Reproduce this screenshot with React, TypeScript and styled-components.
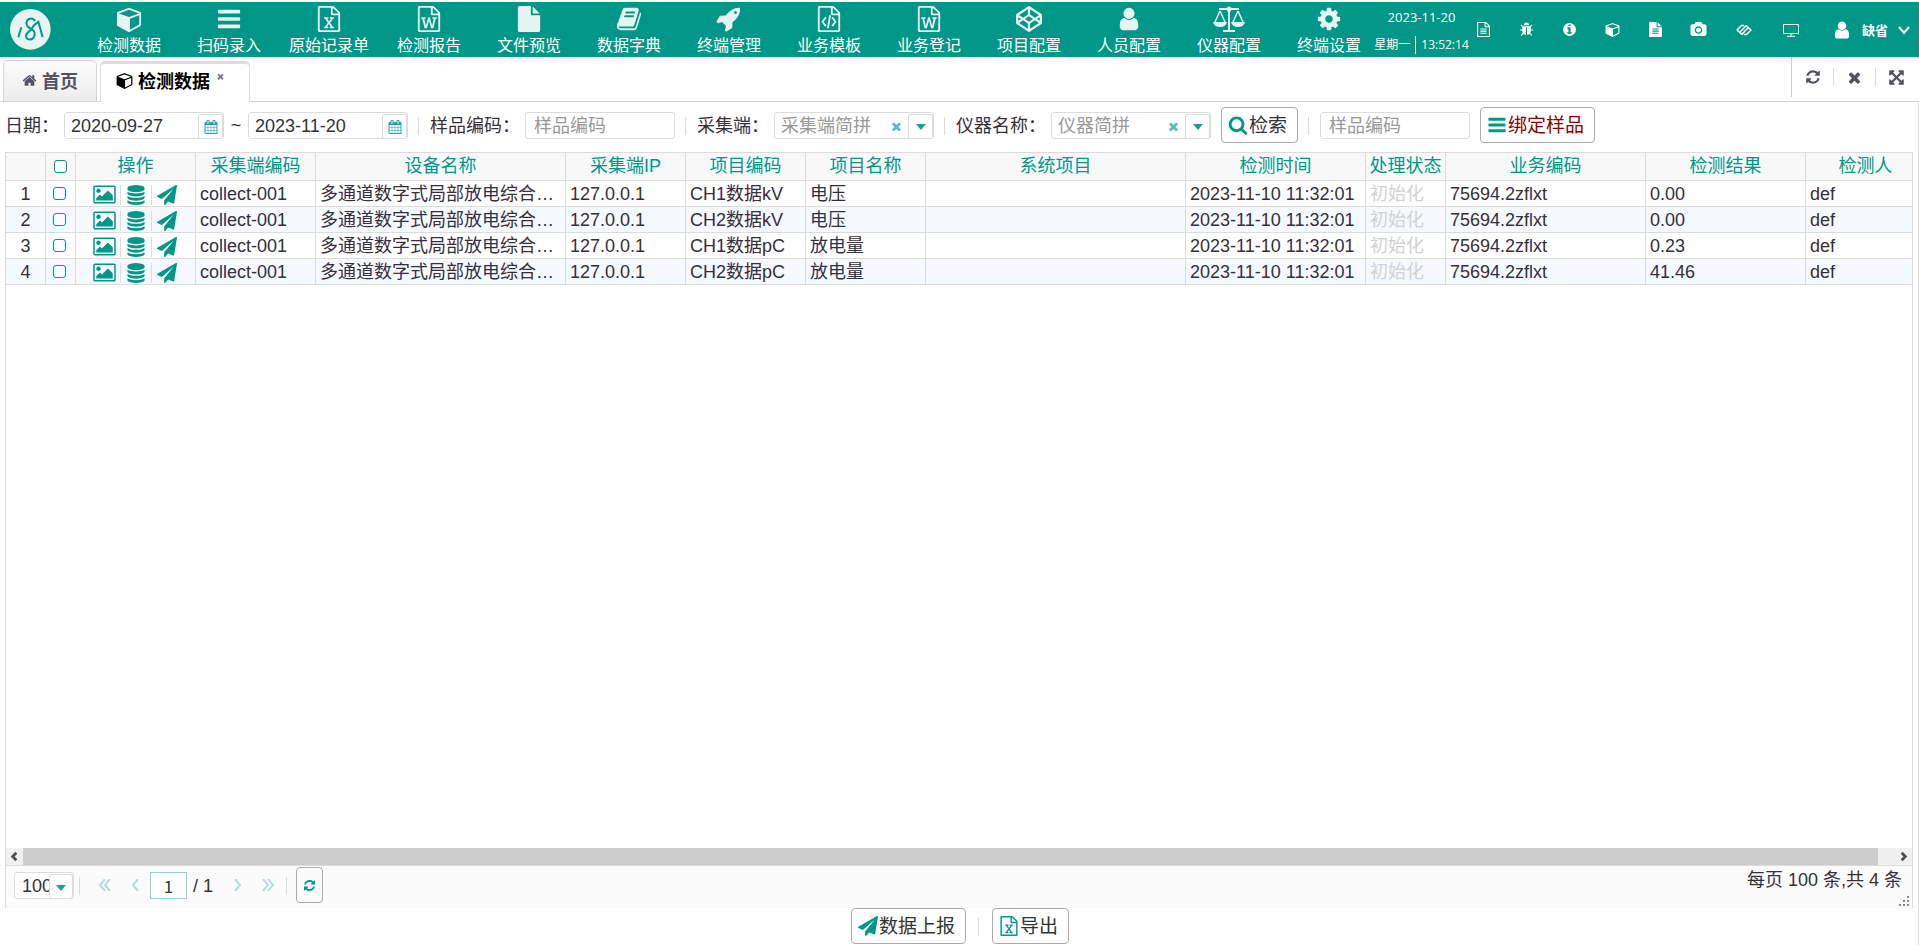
import React from 'react';
import styled, { createGlobalStyle, css } from 'styled-components';

const teal = '#009688';
const line = '#dcdcdc';
const ink = '#362f38';
const cjk = '"Noto Sans CJK SC", sans-serif';

const GlobalStyle = createGlobalStyle`
  *, *::before, *::after { box-sizing: border-box; }
  body {
    margin: 0;
    background: #fff;
    color: ${ink};
    font: 18px/26px "Liberation Sans", ${cjk};
  }
  button, input, select { font: inherit; color: inherit; margin: 0; }
  button { cursor: pointer; }
  a { color: inherit; text-decoration: none; }
`;

/* ---------- icons ---------- */

const glyphs = {
  cube: 'M896 1629l640-349v-636l-640 233v752zM832 764l698-254-698-254-698 254zM1664 512v768q0 35-18 65t-49 47l-704 384q-28 16-61 16t-61-16l-704-384q-31-17-49-47t-18-65v-768q0-40 23-73t61-47l704-256q22-8 44-8t44 8l704 256q38 14 61 47t23 73z',
  bars: 'M1664 1344v128q0 26-19 45t-45 19h-1408q-26 0-45-19t-19-45v-128q0-26 19-45t45-19h1408q26 0 45 19t19 45zm0-512v128q0 26-19 45t-45 19h-1408q-26 0-45-19t-19-45v-128q0-26 19-45t45-19h1408q26 0 45 19t19 45zm0-512v128q0 26-19 45t-45 19h-1408q-26 0-45-19t-19-45v-128q0-26 19-45t45-19h1408q26 0 45 19t19 45z',
  excel: 'M1596 380q28 28 48 76t20 88v1152q0 40-28 68t-68 28h-1344q-40 0-68-28t-28-68v-1600q0-40 28-68t68-28h896q40 0 88 20t76 48zm-444-244v376h376q-10-29-22-41l-313-313q-12-12-41-22zm384 1528v-1024h-416q-40 0-68-28t-28-68v-416h-768v1536h1280zm-979-234v106h281v-106h-75l103-161q5-7 10-16.5t7.5-13.5 3.5-4h2q1 4 5 10 2 4 4.5 7.5t6 8 6.5 8.5l107 161h-76v106h291v-106h-68l-192-273 195-282h67v-107h-279v107h74l-103 159q-4 7-10 16.5t-9 13.5l-2 3h-2q-1-4-5-10-6-11-17-23l-106-159h76v-107h-290v107h68l189 272-194 283h-68z',
  word: 'M1596 380q28 28 48 76t20 88v1152q0 40-28 68t-68 28h-1344q-40 0-68-28t-28-68v-1600q0-40 28-68t68-28h896q40 0 88 20t76 48zm-444-244v376h376q-10-29-22-41l-313-313q-12-12-41-22zm384 1528v-1024h-416q-40 0-68-28t-28-68v-416h-768v1536h1280zm-1175-896v107h70l164 661h159l128-485q7-20 10-46 2-16 2-24h4l3 24q1 3 3.5 20t5.5 26l128 485h159l164-661h70v-107h-300v107h90l-99 438q-5 20-7 46l-2 21h-4l-3-21q-1-5-4-21t-5-25l-144-545h-114l-144 545q-2 9-4.5 24.5t-3.5 21.5l-4 21h-4l-2-21q-2-26-7-46l-99-438h90v-107h-300z',
  code: 'M1596 380q28 28 48 76t20 88v1152q0 40-28 68t-68 28h-1344q-40 0-68-28t-28-68v-1600q0-40 28-68t68-28h896q40 0 88 20t76 48zm-444-244v376h376q-10-29-22-41l-313-313q-12-12-41-22zm384 1528v-1024h-416q-40 0-68-28t-28-68v-416h-768v1536h1280zM608 768q8-11 21-12.5t24 6.5l51 38q11 8 12.5 21t-6.5 24l-182 243 182 243q8 11 6.5 24t-12.5 21l-51 38q-11 8-24 6.5t-21-12.5l-226-301q-14-19 0-38zm802 301q14 19 0 38l-226 301q-8 11-21 12.5t-24-6.5l-51-38q-11-8-12.5-21t6.5-24l182-243-182-243q-8-11-6.5-24t12.5-21l51-38q11-8 24-6.5t21 12.5zm-620 461q-13-2-20.5-13t-5.5-24l138-831q2-13 13-20.5t24-5.5l63 10q13 2 20.5 13t5.5 24l-138 831q-2 13-13 20.5t-24 5.5z',
  file: 'M1152 512v-472q22 14 36 28l408 408q14 14 28 36h-472zm-128 32q0 40 28 68t68 28h544v1056q0 40-28 68t-68 28h-1344q-40 0-68-28t-28-68v-1600q0-40 28-68t68-28h800v544z',
  fileText: 'M1596 476q14 14 28 36h-472v-472q22 14 36 28zm-476 164h544v1056q0 40-28 68t-68 28h-1344q-40 0-68-28t-28-68v-1600q0-40 28-68t68-28h800v544q0 40 28 68t68 28zm160 736v-64q0-14-9-23t-23-9h-704q-14 0-23 9t-9 23v64q0 14 9 23t23 9h704q14 0 23-9t9-23zm0-256v-64q0-14-9-23t-23-9h-704q-14 0-23 9t-9 23v64q0 14 9 23t23 9h704q14 0 23-9t9-23zm0-256v-64q0-14-9-23t-23-9h-704q-14 0-23 9t-9 23v64q0 14 9 23t23 9h704q14 0 23-9t9-23z',
  fileLines: 'M1596 380q28 28 48 76t20 88v1152q0 40-28 68t-68 28h-1344q-40 0-68-28t-28-68v-1600q0-40 28-68t68-28h896q40 0 88 20t76 48zm-444-244v376h376q-10-29-22-41l-313-313q-12-12-41-22zm384 1528v-1024h-416q-40 0-68-28t-28-68v-416h-768v1536h1280zM512 800q0-14 9-23t23-9h704q14 0 23 9t9 23v64q0 14-9 23t-23 9h-704q-14 0-23-9t-9-23v-64zm736 224q14 0 23 9t9 23v64q0 14-9 23t-23 9h-704q-14 0-23-9t-9-23v-64q0-14 9-23t23-9h704zm0 256q14 0 23 9t9 23v64q0 14-9 23t-23 9h-704q-14 0-23-9t-9-23v-64q0-14 9-23t23-9h704z',
  book: 'M1703 478q40 57 18 129l-275 906q-19 64-76.5 107.5t-122.5 43.5h-923q-77 0-148.5-53.5t-99.5-131.5q-24-67-2-127 0-4 3-27t4-37q1-8-3-21.5t-3-19.5q2-11 8-21t16.5-23.5 16.5-23.5q23-38 45-91.5t30-91.5q3-10 .5-30t-.5-28q3-11 17-28t17-23q21-36 42-92t25-90q1-9-2.5-32t.5-28q4-13 22-30.5t22-22.5q19-26 42.5-84.5t27.5-96.5q1-8-3-25.5t-2-26.5q2-8 9-18t18-23 17-21q8-12 16.5-30.5t15-35 16-36 19.5-32 26.5-23.5 36-11.5 47.5 5.5l-1 3q38-9 51-9h761q74 0 114 56t18 130l-274 906q-36 119-71.5 153.5t-128.5 34.5h-869q-27 0-38 15-11 16-1 43 24 70 144 70h923q29 0 56-15.5t35-41.5l300-987q7-22 5-57 38 15 59 43zm-1064 2q-4 13 2 22.5t20 9.5h608q13 0 25.5-9.5t16.5-22.5l21-64q4-13-2-22.5t-20-9.5h-608q-13 0-25.5 9.5t-16.5 22.5zm-83 256q-4 13 2 22.5t20 9.5h608q13 0 25.5-9.5t16.5-22.5l21-64q4-13-2-22.5t-20-9.5h-608q-13 0-25.5 9.5t-16.5 22.5z',
  rocket: 'M1440 448q0-40-28-68t-68-28-68 28-28 68 28 68 68 28 68-28 28-68zm224-288q0 249-75.5 430.5t-253.5 360.5q-81 80-195 176l-20 379q-2 16-16 26l-384 224q-7 4-16 4-12 0-23-9l-64-64q-13-14-8-32l85-276-281-281-276 85q-3 1-9 1-14 0-23-9l-64-64q-17-19-5-39l224-384q10-14 26-16l379-20q96-114 176-195 188-187 358-258t431-71q14 0 24 9.5t10 22.5z',
  codepen: 'M216 1169l603 402v-359l-334-223zm-62-144l193-129-193-129v258zm819 546l603-402-269-180-334 223v359zm-77-493l272-182-272-182-272 182zm-411-275l334-223v-359l-603 402zm960 93l193 129v-258zm-138-93l269-180-603-402v359zm485-180v546q0 41-34 64l-819 546q-21 13-43 13t-43-13l-819-546q-34-23-34-64v-546q0-41 34-64l819-546q21-13 43-13t43 13l819 546q34 23 34 64z',
  user: 'M1536 1399q0 109-62.5 187t-150.5 78h-854q-88 0-150.5-78t-62.5-187q0-85 8.5-160.5t31.5-152 58.5-131 94-89 134.5-34.5q131 128 313 128t313-128q76 0 134.5 34.5t94 89 58.5 131 31.5 152 8.5 160.5zm-256-887q0 159-112.5 271.5t-271.5 112.5-271.5-112.5-112.5-271.5 112.5-271.5 271.5-112.5 271.5 112.5 112.5 271.5z',
  cog: 'M1152 896q0-106-75-181t-181-75-181 75-75 181 75 181 181 75 181-75 75-181zm512-109v222q0 12-8 23t-20 13l-185 28q-19 54-39 91 35 50 107 138 10 12 10 25t-9 23q-27 37-99 108t-94 71q-12 0-26-9l-138-108q-44 23-91 38-16 136-29 186-7 28-36 28h-222q-14 0-24.5-8.5t-11.5-21.5l-28-184q-49-16-90-37l-141 107q-10 9-25 9-14 0-25-11-126-114-165-168-7-10-7-23 0-12 8-23 15-21 51-66.5t54-70.5q-27-50-41-99l-183-27q-13-2-21-12.5t-8-23.5v-222q0-12 8-23t19-13l186-28q14-46 39-92-40-57-107-138-10-12-10-24 0-10 9-23 26-36 98.5-107.5t94.5-71.5q13 0 26 10l138 107q44-23 91-38 16-136 29-186 7-28 36-28h222q14 0 24.5 8.5t11.5 21.5l28 184q49 16 90 37l142-107q9-9 24-9 13 0 25 10 129 119 165 170 7 8 7 22 0 12-8 23-15 21-51 66.5t-54 70.5q26 50 41 98l183 28q13 2 21 12.5t8 23.5z',
  home: 'M1472 992v480q0 26-19 45t-45 19h-384v-384h-256v384h-384q-26 0-45-19t-19-45v-480q0-1 .5-3t.5-3l575-474 575 474q1 2 1 6zm223-69l-62 74q-8 9-21 11h-3q-13 0-21-7l-692-577-692 577q-12 8-24 7-13-2-21-11l-62-74q-8-10-7-23.5t11-21.5l719-599q32-26 76-26t76 26l244 204v-195q0-14 9-23t23-9h192q14 0 23 9t9 23v408l219 182q10 8 11 21.5t-7 23.5z',
  times: 'M1490 1322q0 40-28 68l-136 136q-28 28-68 28t-68-28l-294-294-294 294q-28 28-68 28t-68-28l-136-136q-28-28-28-68t28-68l294-294-294-294q-28-28-28-68t28-68l136-136q28-28 68-28t68 28l294 294 294-294q28-28 68-28t68 28l136 136q28 28 28 68t-28 68l-294 294 294 294q28 28 28 68z',
  refresh: 'M1639 1056q0 5-1 7-64 268-268 434.5t-478 166.5q-146 0-282.5-55t-243.5-157l-129 129q-19 19-45 19t-45-19-19-45v-448q0-26 19-45t45-19h448q26 0 45 19t19 45-19 45l-137 137q71 66 161 102t187 36q134 0 250-65t186-179q11-17 53-117 8-23 30-23h192q13 0 22.5 9.5t9.5 22.5zm25-800v448q0 26-19 45t-45 19h-448q-26 0-45-19t-19-45 19-45l138-138q-148-137-349-137-134 0-250 65t-186 179q-11 17-53 117-8 23-30 23h-199q-13 0-22.5-9.5t-9.5-22.5v-7q65-268 270-434.5t480-166.5q146 0 284 55.5t245 156.5l130-129q19-19 45-19t45 19 19 45z',
  arrows: 'M1411 541l-355 355 355 355 144-144q29-31 70-14 39 17 39 59v448q0 26-19 45t-45 19h-448q-42 0-59-40-17-39 14-69l144-144-355-355-355 355 144 144q31 30 14 69-17 40-59 40h-448q-26 0-45-19t-19-45v-448q0-42 40-59 39-17 69 14l144 144 355-355-355-355-144 144q-19 19-45 19-12 0-24-5-40-17-40-59v-448q0-26 19-45t45-19h448q42 0 59 40 17 39-14 69l-144 144 355 355 355-355-144-144q-31-30-14-69 17-40 59-40h448q26 0 45 19t19 45v448q0 42-39 59-13 5-25 5-26 0-45-19z',
  search: 'M1216 832q0-185-131.5-316.5t-316.5-131.5-316.5 131.5-131.5 316.5 131.5 316.5 316.5 131.5 316.5-131.5 131.5-316.5zm512 832q0 52-38 90t-90 38q-54 0-90-38l-343-342q-179 124-399 124-143 0-273.5-55.5t-225-150-150-225-55.5-273.5 55.5-273.5 150-225 225-150 273.5-55.5 273.5 55.5 225 150 150 225 55.5 273.5q0 220-124 399l343 343q37 37 37 90z',
  database: 'M896 768q237 0 443-43t325-127v170q0 69-103 128t-280 93.5-385 34.5-385-34.5-280-93.5-103-128v-170q119 84 325 127t443 43zm0 768q237 0 443-43t325-127v170q0 69-103 128t-280 93.5-385 34.5-385-34.5-280-93.5-103-128v-170q119 84 325 127t443 43zm0-384q237 0 443-43t325-127v170q0 69-103 128t-280 93.5-385 34.5-385-34.5-280-93.5-103-128v-170q119 84 325 127t443 43zm0-1152q208 0 385 34.5t280 93.5 103 128v128q0 69-103 128t-280 93.5-385 34.5-385-34.5-280-93.5-103-128v-128q0-69 103-128t280-93.5 385-34.5z',
  image: 'M576 576q0 80-56 136t-136 56-136-56-56-136 56-136 136-56 136 56 56 136zm1024 384v448h-1408v-192l320-320 160 160 512-512zm96-704h-1600q-13 0-22.5 9.5t-9.5 22.5v1216q0 13 9.5 22.5t22.5 9.5h1600q13 0 22.5-9.5t9.5-22.5v-1216q0-13-9.5-22.5t-22.5-9.5zm160 32v1216q0 66-47 113t-113 47h-1600q-66 0-113-47t-47-113v-1216q0-66 47-113t113-47h1600q66 0 113 47t47 113z',
  plane: 'M1764 11q33 24 27 64l-256 1536q-5 29-32 45-14 8-31 8-11 0-24-5l-453-185-242 295q-18 23-49 23-13 0-22-4-19-7-30.5-23.5t-11.5-36.5v-349l864-1059-1069 925-395-162q-37-14-40-55-2-40 32-59l1664-960q15-9 32-9 20 0 36 11z',
  calendar: 'M192 1664h288v-288h-288v288zm352 0h320v-288h-320v288zm-352-352h288v-320h-288v320zm352 0h320v-320h-320v320zm-352-384h288v-288h-288v288zm736 736h320v-288h-320v288zm-384-736h320v-288h-320v288zm768 736h288v-288h-288v288zm-384-352h320v-320h-320v320zm-352-864v-288q0-13-9.5-22.5t-22.5-9.5h-64q-13 0-22.5 9.5t-9.5 22.5v288q0 13 9.5 22.5t22.5 9.5h64q13 0 22.5-9.5t9.5-22.5zm736 864h288v-320h-288v320zm-384-384h320v-288h-320v288zm384 0h288v-288h-288v288zm32-480v-288q0-13-9.5-22.5t-22.5-9.5h-64q-13 0-22.5 9.5t-9.5 22.5v288q0 13 9.5 22.5t22.5 9.5h64q13 0 22.5-9.5t9.5-22.5zm384-64v1280q0 52-38 90t-90 38h-1408q-52 0-90-38t-38-90v-1280q0-52 38-90t90-38h128v-96q0-66 47-113t113-47h64q66 0 113 47t47 113v96h384v-96q0-66 47-113t113-47h64q66 0 113 47t47 113v96h128q52 0 90 38t38 90z',
  info: 'M1152 1376v-160q0-14-9-23t-23-9h-96v-512q0-14-9-23t-23-9h-320q-14 0-23 9t-9 23v160q0 14 9 23t23 9h96v320h-96q-14 0-23 9t-9 23v160q0 14 9 23t23 9h448q14 0 23-9t9-23zm-128-896v-160q0-14-9-23t-23-9h-192q-14 0-23 9t-9 23v160q0 14 9 23t23 9h192q14 0 23-9t9-23zm640 416q0 209-103 385.5t-279.5 279.5-385.5 103-385.5-103-279.5-279.5-103-385.5 103-385.5 279.5-279.5 385.5-103 385.5 103 279.5 279.5 103 385.5z',
  camera: 'M896 672q119 0 203.5 84.5t84.5 203.5-84.5 203.5-203.5 84.5-203.5-84.5-84.5-203.5 84.5-203.5 203.5-84.5zm704-416q106 0 181 75t75 181v896q0 106-75 181t-181 75h-1408q-106 0-181-75t-75-181v-896q0-106 75-181t181-75h224l51-136q19-49 69.5-84.5t103.5-35.5h512q53 0 103.5 35.5t69.5 84.5l51 136h224zm-704 1152q185 0 316.5-131.5t131.5-316.5-131.5-316.5-316.5-131.5-316.5 131.5-131.5 316.5 131.5 316.5 316.5 131.5z',
  bug: 'M1696 960q0 26-19 45t-45 19h-224q0 171-67 290l208 209q19 19 19 45t-19 45q-18 19-45 19t-45-19l-198-197q-5 5-15 13t-42 28.5-65 36.5-82 29-97 13v-896h-128v896q-51 0-101.5-13.5t-87-33-66-39-43.5-32.5l-15-14-183 207q-20 21-48 21-24 0-43-16-19-18-20.5-44.5t15.5-46.5l202-227q-58-114-58-274h-224q-26 0-45-19t-19-45 19-45 45-19h224v-294l-173-173q-19-19-19-45t19-45 45-19 45 19l173 173h844l173-173q19-19 45-19t45 19 19 45-19 45l-173 173v294h224q26 0 45 19t19 45zm-480-576h-640q0-133 93.5-226.5t226.5-93.5 226.5 93.5 93.5 226.5z',
};

type GlyphName = keyof typeof glyphs;

const Svg = styled.svg<{ $size: number }>`
  width: ${p => p.$size}px;
  height: ${p => p.$size}px;
  flex: none;
  display: block;
  fill: currentColor;
  overflow: visible;
`;

const Glyph = ({ name, size }: { name: GlyphName; size: number }) => (
  <Svg $size={size} viewBox={name === 'cube' ? '-64 0 1792 1792' : '0 0 1792 1792'} aria-hidden="true">
    <path d={glyphs[name]} />
  </Svg>
);

const Logo = () => (
  <svg width="41" height="41" viewBox="32 27 123 123" fill="none" stroke={teal} strokeWidth="6" strokeLinejoin="round" aria-label="logo">
    <circle cx="93" cy="88" r="61" fill="#e6f4f2" stroke="none" />
    <path d="M66 82L57 112" />
    <path d="M107 63C104 56 96 54 89 57C81 61 79 71 84 78C89 84 99 87 104 94C108 101 106 113 98 117C90 121 81 117 80 109C79 100 87 96 93 91C98 86 100 80 105 75L117 65L130 111" />
  </svg>
);

const ScaleIcon = () => (
  <svg width="32" height="26" viewBox="0 0 32 26" fill="none" stroke="currentColor" strokeWidth="1.500" aria-hidden="true">
    <path d="M6 3H26M16 2V24M10 25H22" strokeWidth="2" />
    <circle cx="16" cy="3" r="2.500" fill="currentColor" stroke="none" />
    <path d="M7 5L2 16M7 5L12 16M25 5L20 16M25 5L30 16" />
    <path d="M0 16H14Q13 21 7 21T0 16ZM18 16H32Q31 21 25 21T18 16Z" fill="currentColor" stroke="none" />
  </svg>
);

const LinkIcon = () => (
  <svg width="16" height="12" viewBox="0 0 16 12" fill="none" stroke="currentColor" strokeWidth="1.500" strokeLinejoin="round" aria-hidden="true">
    <path d="M4 8L8 4M6 10L10 6M8 1.500L5.500 1.500L1 6L6 10.500M10 1.500L15 6L10.500 10.500L8 10.500M8 8L12 4M8 4L10 1.500M8 8L6 10.500" />
  </svg>
);

const ScreenIcon = () => (
  <svg width="16" height="14" viewBox="0 0 16 14" fill="none" stroke="currentColor" aria-hidden="true">
    <path d="M0.500 1.500H15.500V10.500H0.500ZM8 10.500V13M4 13.300H12" />
  </svg>
);

const Chevron = ({ d, size = 12, weight = 2 }: { d: string; size?: number; weight?: number }) => (
  <svg width={size} height={size} viewBox="0 0 12 12" fill="none" stroke="currentColor" strokeWidth={weight} aria-hidden="true">
    <path d={d} />
  </svg>
);

const Caret = () => (
  <svg width="10" height="7" viewBox="0 0 10 7" aria-hidden="true">
    <path d="M0 0H10L5 6Z" fill="#1f9e91" />
  </svg>
);

/* ---------- header ---------- */

const Page = styled.div`
  min-height: 100vh;
  display: flex;
  flex-direction: column;
  padding-top: 2px;
`;

const Header = styled.header`
  flex: none;
  height: 55px;
  display: flex;
  background: ${teal};
  color: #fff;
`;

const Brand = styled.a`
  flex: none;
  width: 79px;
  padding: 7px 0 0 10px;
`;

const Nav = styled.nav`
  display: flex;
`;

const NavLink = styled.a`
  width: 100px;
  padding-top: 4px;
  display: flex;
  flex-direction: column;
  align-items: center;
  font: 16px/24px ${cjk};
  white-space: nowrap;
  svg { color: #e6f4f2; }
`;

const Clock = styled.div`
  flex: none;
  margin-left: -6px;
  width: 97px;
  text-align: center;
  white-space: nowrap;
  font: 13px/18px "Open Sans", ${cjk};
`;

const ClockDate = styled.div`
  padding-top: 6px;
`;

const ClockTime = styled.div`
  display: flex;
  justify-content: center;
  gap: 5px;
  margin-top: 10px;
  font-size: 12px;
`;

const ClockDay = styled.span`
  padding-right: 5px;
  border-right: 1px solid #fff;
`;

const Tools = styled.div`
  display: flex;
  align-items: center;
  gap: 27px;
  padding: 0 9px 0 5px;
  margin-left: auto;
`;

const ToolLink = styled.a<{ $wide?: boolean }>`
  width: ${p => (p.$wide ? 20 : 16)}px;
  display: flex;
  justify-content: center;
`;

const UserMenu = styled.button`
  display: flex;
  align-items: center;
  gap: 10px;
  margin-left: 4px;
  padding: 0;
  border: 0;
  background: none;
  color: #fff;
  font: bold 13px/20px ${cjk};
`;

/* ---------- tabs ---------- */

const TabBar = styled.div`
  flex: none;
  height: 45px;
  display: flex;
  align-items: flex-end;
  gap: 3px;
  padding-left: 3px;
  border-bottom: 1px solid #d2d2d2;
`;

const Tab = styled.div<{ $active?: boolean }>`
  position: relative;
  display: flex;
  align-items: center;
  justify-content: center;
  height: 41px;
  width: 94px;
  padding-bottom: 2px;
  border: 1px solid #d6d6d6;
  border-bottom: 0;
  border-radius: 5px 5px 0 0;
  background: linear-gradient(#fbfbfb, #ededed);
  color: #55525f;
  font-weight: bold;
  font-family: ${cjk};
  a { display: flex; align-items: center; gap: 5px; }
  ${p => p.$active && css`
    width: 150px;
    margin-bottom: -1px;
    border-color: #ddd;
    border-top-width: 3px;
    background: #fff;
    color: #000;
    justify-content: flex-start;
    padding: 0 0 6px 15px;
    gap: 6px;
  `}
`;

const TabClose = styled.button`
  align-self: flex-start;
  margin-top: 8px;
  padding: 0;
  border: 0;
  background: none;
  color: #77758a;
`;

const TabTools = styled.div`
  align-self: flex-start;
  height: 40px;
  margin-left: auto;
  padding: 0 2px 0 0;
  display: flex;
  align-items: center;
  border-left: 1px solid #ccc;
`;

const TabTool = styled.button`
  height: 18px;
  width: 42px;
  display: flex;
  align-items: center;
  justify-content: center;
  padding: 0;
  border: 0;
  background: none;
  color: #55525f;
  & + & { border-left: 1px solid ${line}; }
  &:first-child { width: 41px; }
`;

/* ---------- search bar ---------- */

const Panel = styled.main`
  flex: 1;
  display: flex;
  flex-direction: column;
  border-right: 1px solid ${line};
`;

const Toolbar = styled.form`
  display: flex;
  align-items: center;
  gap: 10px;
  padding: 5px 5px 9px;
  white-space: nowrap;
`;

const Field = styled.div`
  display: flex;
  align-items: center;
  gap: 5px;
  label { padding-top: 2px; }
`;

const Tilde = styled.span`
  width: 14px;
  text-align: center;
`;

const Divider = styled.span`
  flex: none;
  width: 2px;
  height: 18px;
  margin-top: 2px;
  border-left: 1px solid ${line};
`;

const InputBox = styled.div<{ $width: number; $pad: number }>`
  display: flex;
  align-items: flex-end;
  width: ${p => p.$width}px;
  height: 27px;
  padding-left: ${p => p.$pad}px;
  border: 1px solid ${line};
  border-radius: 3px;
  background: #fff;
`;

const TextInput = styled.input`
  flex: 1;
  min-width: 0;
  height: 25px;
  padding: 1px 0 0;
  border: 0;
  outline: 0;
  background: none;
  color: #333;
  &::placeholder { color: #999; opacity: 1; }
`;

const InnerButton = styled.button`
  flex: none;
  width: 25px;
  height: 24px;
  display: flex;
  align-items: center;
  justify-content: center;
  padding: 2px 0 0;
  border: 1px solid ${line};
  border-bottom: 0;
  border-radius: 3px 3px 0 0;
  background: #fff;
  color: #26a69a;
`;

const ClearButton = styled.button`
  flex: none;
  align-self: center;
  padding: 3px 5px 0 0;
  border: 0;
  background: none;
  color: #5fbdb3;
`;

const Button = styled.button<{ $danger?: boolean; $small?: boolean }>`
  height: 36px;
  display: flex;
  align-items: center;
  justify-content: center;
  gap: 1px;
  padding: 0 10px 0 6px;
  border: 1px solid #aaa;
  border-radius: 4px;
  background: #fff;
  color: ${p => (p.$danger ? '#8b0000' : '#333')};
  font-size: 19px;
  white-space: nowrap;
  svg { color: ${teal}; }
`;

const ButtonLabel = styled.span`
  padding-top: 2px;
`;

/* ---------- grid ---------- */

const Grid = styled.section`
  flex: 1;
  display: flex;
  flex-direction: column;
  margin: 0 5px;
  border: 1px solid ${line};
  border-bottom: 0;
  min-width: 0;
`;

const GridBody = styled.div`
  flex: 1;
  overflow: hidden;
  width: 0;
  min-width: 100%;
`;

const Table = styled.table`
  width: 1920px;
  table-layout: fixed;
  border-collapse: separate;
  border-spacing: 0;
  tbody tr:nth-child(even) { background: #f5f9fd; }
`;

const cell = css`
  height: 26px;
  padding: 0 4px;
  border: solid ${line};
  border-width: 0 1px 1px 0;
  line-height: 25px;
  white-space: nowrap;
  overflow: hidden;
  text-overflow: ellipsis;
`;

const Th = styled.th`
  ${cell}
  height: 28px;
  padding: 0;
  background: #f8f8f8;
  color: ${teal};
  font-weight: normal;
`;

const Td = styled.td<{ $center?: boolean; $muted?: boolean }>`
  ${cell}
  padding-top: 2px;
  line-height: 23px;
  text-align: ${p => (p.$center ? 'center' : 'left')};
  color: ${p => (p.$muted ? '#d2d2d2' : 'inherit')};
`;

const Check = styled.input.attrs({ type: 'checkbox' })`
  appearance: none;
  display: block;
  width: 13px;
  height: 13px;
  margin: 0 0 2px 3px;
  border: 1px solid ${teal};
  border-radius: 3px;
  background: #fff;
  ${Th} & { margin: 0 auto; }
`;

const Actions = styled.div`
  display: flex;
  align-items: center;
  justify-content: center;
  height: 23px;
`;

const Action = styled.button`
  width: 31px;
  height: 20px;
  display: flex;
  align-items: center;
  justify-content: center;
  padding: 0;
  border: 0;
  background: none;
  color: ${teal};
  & + & { border-left: 1px solid ${line}; }
`;

const ScrollTrack = styled.div`
  display: flex;
  height: 18px;
  background: #f0f0f0;
  border-bottom: 1px solid ${line};
`;

const ScrollThumb = styled.div`
  flex: 1;
  margin-right: 17px;
  background: #cdcdcd;
`;

const ScrollButton = styled.button`
  width: 17px;
  display: flex;
  align-items: center;
  justify-content: center;
  padding: 0;
  border: 0;
  background: none;
  color: #505050;
`;

/* ---------- pager ---------- */

const Pager = styled.div`
  position: relative;
  display: flex;
  align-items: center;
  height: 42px;
  padding: 0 10px 4px 8px;
  background: #fbfbfb;
`;

const SizeBox = styled.div`
  position: relative;
  margin-right: 5px;
`;

const SizeSelect = styled.select`
  appearance: none;
  display: block;
  width: 60px;
  height: 27px;
  padding: 0 24px 0 7px;
  border: 1px solid ${line};
  border-radius: 3px;
  background: #fff;
  color: #333;
`;

const SizeCaret = styled.span`
  position: absolute;
  right: 1px;
  bottom: 1px;
  width: 24px;
  height: 24px;
  padding-top: 4px;
  display: flex;
  align-items: center;
  justify-content: center;
  border: 1px solid ${line};
  border-bottom: 0;
  border-radius: 3px;
  background: #fff;
  pointer-events: none;
`;

const PageLinks = styled.div`
  display: flex;
  align-items: center;
  margin: 0 3px 0 9px;
`;

const PageButton = styled.button`
  width: 30px;
  height: 27px;
  padding: 0;
  border: 0;
  background: none;
  color: #b2dfdb;
`;

const PageInput = styled.input`
  width: 37px;
  height: 27px;
  padding: 0;
  margin-top: 1px;
  border: 1px solid #8fd3cc;
  background: #fff;
  color: #333;
  text-align: center;
  font-family: ${cjk};
  font-size: 17px;
`;

const PageTotal = styled.span`
  width: 36px;
  padding: 2px 0 0 6px;
`;

const RefreshButton = styled(Button)`
  width: 27px;
  margin-left: 8px;
  padding: 0;
  background: none;
`;

const Summary = styled.span`
  align-self: flex-start;
  margin-left: auto;
  padding-top: 1px;
`;

const Grip = styled.svg`
  position: absolute;
  right: 3px;
  bottom: 2px;
`;

const Footer = styled.footer`
  display: flex;
  align-items: center;
  justify-content: center;
  gap: 12px;
  height: 37px;
  padding: 0 0 1px 2px;
`;

/* ---------- data ---------- */

const navItems: { label: string; icon: GlyphName | 'scale' }[] = [
  { label: '检测数据', icon: 'cube' },
  { label: '扫码录入', icon: 'bars' },
  { label: '原始记录单', icon: 'excel' },
  { label: '检测报告', icon: 'word' },
  { label: '文件预览', icon: 'file' },
  { label: '数据字典', icon: 'book' },
  { label: '终端管理', icon: 'rocket' },
  { label: '业务模板', icon: 'code' },
  { label: '业务登记', icon: 'word' },
  { label: '项目配置', icon: 'codepen' },
  { label: '人员配置', icon: 'user' },
  { label: '仪器配置', icon: 'scale' },
  { label: '终端设置', icon: 'cog' },
];

const toolIcons: GlyphName[] = ['fileLines', 'bug', 'info', 'cube', 'fileText', 'camera'];

const colWidths = [40, 30, 120, 120, 250, 120, 120, 120, 260, 180, 80, 200, 160, 120];
const columns = ['操作', '采集端编码', '设备名称', '采集端IP', '项目编码', '项目名称', '系统项目', '检测时间', '处理状态', '业务编码', '检测结果', '检测人'];

const rows = [
  { code: 'CH1数据kV', name: '电压', result: '0.00' },
  { code: 'CH2数据kV', name: '电压', result: '0.00' },
  { code: 'CH1数据pC', name: '放电量', result: '0.23' },
  { code: 'CH2数据pC', name: '放电量', result: '41.46' },
];

/* ---------- parts ---------- */

const DateField = ({ id, label, value }: { id: string; label: string; value: string }) => (
  <InputBox $width={160} $pad={6}>
    <TextInput id={id} aria-label={label} defaultValue={value} />
    <InnerButton type="button" aria-label="选择日期"><Glyph name="calendar" size={14} /></InnerButton>
  </InputBox>
);

const ComboField = ({ id, placeholder }: { id: string; placeholder: string }) => (
  <InputBox $width={160} $pad={6}>
    <TextInput id={id} placeholder={placeholder} />
    <ClearButton type="button" aria-label="清除"><Glyph name="times" size={13} /></ClearButton>
    <InnerButton type="button" aria-label="展开"><Caret /></InnerButton>
  </InputBox>
);

export default function App() {
  return (
    <Page>
      <GlobalStyle />
      <Header>
        <Brand href="#"><Logo /></Brand>
        <Nav>
          {navItems.map(item => (
            <NavLink href="#" key={item.label}>
              {item.icon === 'scale' ? <ScaleIcon /> : <Glyph name={item.icon} size={26} />}
              {item.label}
            </NavLink>
          ))}
        </Nav>
        <Clock>
          <ClockDate>2023-11-20</ClockDate>
          <ClockTime><ClockDay>星期一</ClockDay><span>13:52:14</span></ClockTime>
        </Clock>
        <Tools>
          {toolIcons.map(name => (
            <ToolLink href="#" key={name} aria-label={name}><Glyph name={name} size={15} /></ToolLink>
          ))}
          <ToolLink href="#" $wide aria-label="link"><LinkIcon /></ToolLink>
          <ToolLink href="#" $wide aria-label="screen"><ScreenIcon /></ToolLink>
          <UserMenu type="button">
            <Glyph name="user" size={20} />
            <span>缺省</span>
            <Chevron d="M1 3L6 9L11 3" />
          </UserMenu>
        </Tools>
      </Header>

      <TabBar>
        <Tab><a href="#"><Glyph name="home" size={15} />首页</a></Tab>
        <Tab $active>
          <a href="#"><Glyph name="cube" size={17} />检测数据</a>
          <TabClose type="button" aria-label="关闭"><Glyph name="times" size={9} /></TabClose>
        </Tab>
        <TabTools>
          <TabTool type="button" aria-label="刷新"><Glyph name="refresh" size={16} /></TabTool>
          <TabTool type="button" aria-label="关闭全部"><Glyph name="times" size={17} /></TabTool>
          <TabTool type="button" aria-label="全屏"><Glyph name="arrows" size={17} /></TabTool>
        </TabTools>
      </TabBar>

      <Panel>
        <Toolbar onSubmit={e => e.preventDefault()}>
          <Field>
            <label htmlFor="from">日期：</label>
            <DateField id="from" label="开始日期" value="2020-09-27" />
            <Tilde>~</Tilde>
            <DateField id="to" label="结束日期" value="2023-11-20" />
          </Field>
          <Divider />
          <Field>
            <label htmlFor="sample">样品编码：</label>
            <InputBox $width={150} $pad={8}><TextInput id="sample" placeholder="样品编码" /></InputBox>
          </Field>
          <Divider />
          <Field>
            <label htmlFor="collector">采集端：</label>
            <ComboField id="collector" placeholder="采集端简拼" />
          </Field>
          <Divider />
          <Field>
            <label htmlFor="device">仪器名称：</label>
            <ComboField id="device" placeholder="仪器简拼" />
          </Field>
          <Button type="submit"><Glyph name="search" size={20} /><ButtonLabel>检索</ButtonLabel></Button>
          <Divider />
          <InputBox $width={150} $pad={8}><TextInput aria-label="样品编码" placeholder="样品编码" /></InputBox>
          <Button type="button" $danger><Glyph name="bars" size={20} /><ButtonLabel>绑定样品</ButtonLabel></Button>
        </Toolbar>

        <Grid>
          <GridBody>
            <Table>
              <colgroup>
                {colWidths.map((w, i) => <col key={i} width={w} />)}
              </colgroup>
              <thead>
                <tr>
                  <Th />
                  <Th><Check aria-label="全选" /></Th>
                  {columns.map(c => <Th key={c}>{c}</Th>)}
                </tr>
              </thead>
              <tbody>
                {rows.map((r, i) => (
                  <tr key={r.code}>
                    <Td $center>{i + 1}</Td>
                    <Td><Check aria-label={`选择第${i + 1}行`} /></Td>
                    <Td>
                      <Actions>
                        <Action type="button" aria-label="图片"><Glyph name="image" size={21} /></Action>
                        <Action type="button" aria-label="数据"><Glyph name="database" size={20} /></Action>
                        <Action type="button" aria-label="上报"><Glyph name="plane" size={20} /></Action>
                      </Actions>
                    </Td>
                    <Td>collect-001</Td>
                    <Td>多通道数字式局部放电综合…</Td>
                    <Td>127.0.0.1</Td>
                    <Td>{r.code}</Td>
                    <Td>{r.name}</Td>
                    <Td />
                    <Td>2023-11-10 11:32:01</Td>
                    <Td $muted>初始化</Td>
                    <Td>75694.2zflxt</Td>
                    <Td>{r.result}</Td>
                    <Td>def</Td>
                  </tr>
                ))}
              </tbody>
            </Table>
          </GridBody>
          <ScrollTrack>
            <ScrollButton type="button" aria-label="向左"><Chevron d="M8 2L4 6L8 10" size={11} weight={3} /></ScrollButton>
            <ScrollThumb />
            <ScrollButton type="button" aria-label="向右"><Chevron d="M4 2L8 6L4 10" size={11} weight={3} /></ScrollButton>
          </ScrollTrack>
          <Pager>
            <SizeBox>
              <SizeSelect aria-label="每页条数" defaultValue="100"><option>100</option></SizeSelect>
              <SizeCaret><Caret /></SizeCaret>
            </SizeBox>
            <Divider />
            <PageLinks>
              <PageButton type="button" aria-label="首页"><Chevron d="M6 0L1 6L6 12M11 0L6 6L11 12" /></PageButton>
              <PageButton type="button" aria-label="上一页"><Chevron d="M9 0L4 6L9 12" /></PageButton>
              <PageInput aria-label="页码" defaultValue="1" />
              <PageTotal>/ 1</PageTotal>
              <PageButton type="button" aria-label="下一页"><Chevron d="M3 0L8 6L3 12" /></PageButton>
              <PageButton type="button" aria-label="末页"><Chevron d="M1 0L6 6L1 12M6 0L11 6L6 12" /></PageButton>
            </PageLinks>
            <Divider />
            <RefreshButton type="button" aria-label="刷新"><Glyph name="refresh" size={13} /></RefreshButton>
            <Summary>每页 100 条,共 4 条</Summary>
            <Grip width="10" height="10" viewBox="0 0 10 10" fill="#888" aria-hidden="true">
              <path d="M8 0h2v2h-2zM4 4h2v2h-2zM8 4h2v2h-2zM0 8h2v2h-2zM4 8h2v2h-2zM8 8h2v2h-2z" />
            </Grip>
          </Pager>
        </Grid>

        <Footer>
          <Button type="button"><Glyph name="plane" size={20} /><ButtonLabel>数据上报</ButtonLabel></Button>
          <Divider />
          <Button type="button"><Glyph name="excel" size={20} /><ButtonLabel>导出</ButtonLabel></Button>
        </Footer>
      </Panel>
    </Page>
  );
}
